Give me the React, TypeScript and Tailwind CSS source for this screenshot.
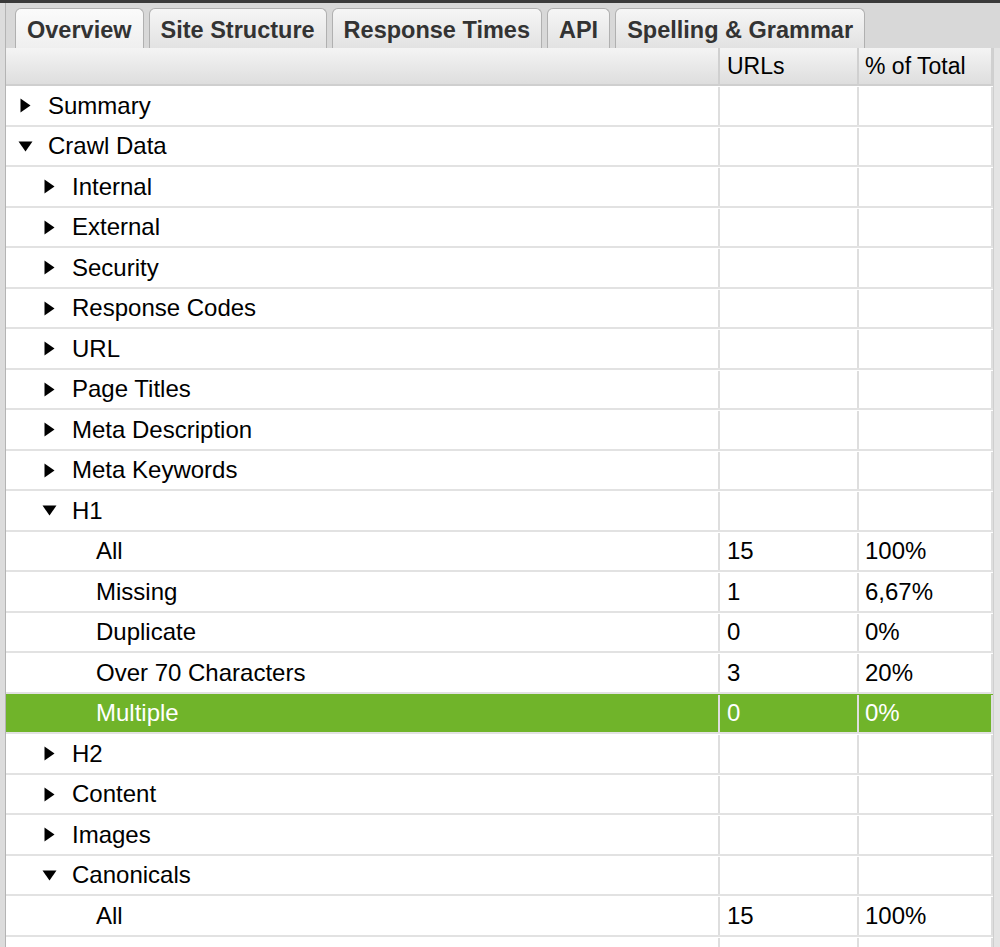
import React from "react";

type Row = {
  label: string;
  level: number;
  arrow?: "right" | "down";
  urls?: string;
  pct?: string;
  selected?: boolean;
};

const tabs = ["Overview", "Site Structure", "Response Times", "API", "Spelling & Grammar"];

const rows: Row[] = [
  { label: "Summary", level: 0, arrow: "right" },
  { label: "Crawl Data", level: 0, arrow: "down" },
  { label: "Internal", level: 1, arrow: "right" },
  { label: "External", level: 1, arrow: "right" },
  { label: "Security", level: 1, arrow: "right" },
  { label: "Response Codes", level: 1, arrow: "right" },
  { label: "URL", level: 1, arrow: "right" },
  { label: "Page Titles", level: 1, arrow: "right" },
  { label: "Meta Description", level: 1, arrow: "right" },
  { label: "Meta Keywords", level: 1, arrow: "right" },
  { label: "H1", level: 1, arrow: "down" },
  { label: "All", level: 2, urls: "15", pct: "100%" },
  { label: "Missing", level: 2, urls: "1", pct: "6,67%" },
  { label: "Duplicate", level: 2, urls: "0", pct: "0%" },
  { label: "Over 70 Characters", level: 2, urls: "3", pct: "20%" },
  { label: "Multiple", level: 2, urls: "0", pct: "0%", selected: true },
  { label: "H2", level: 1, arrow: "right" },
  { label: "Content", level: 1, arrow: "right" },
  { label: "Images", level: 1, arrow: "right" },
  { label: "Canonicals", level: 1, arrow: "down" },
  { label: "All", level: 2, urls: "15", pct: "100%" },
  { label: "", level: 2 },
];

function Arrow({ dir }: { dir: "right" | "down" }) {
  return dir === "right" ? (
    <svg width="11" height="15" viewBox="0 0 11 15" className="shrink-0">
      <path d="M0.5 0.5 L10.5 7.5 L0.5 14.5 Z" fill="#000" />
    </svg>
  ) : (
    <svg width="15" height="11" viewBox="0 0 15 11" className="shrink-0 -ml-[2px]">
      <path d="M0.5 0.5 L14.5 0.5 L7.5 10.5 Z" fill="#000" />
    </svg>
  );
}

const indent = ["pl-[14px]", "pl-[38px]", "pl-[62px]"];

export default function App() {
  return (
    <div
      className="w-[1000px] h-[947px] overflow-hidden bg-[#d8d8d8] border-t-[3px] border-[#3a3a3a] flex"
      style={{ fontFamily: '"Liberation Sans", Arial, Helvetica, sans-serif' }}
    >
      {/* left edge */}
      <div className="w-[6px] shrink-0 bg-[#dcdcdc] border-r border-[#b4b4b4]" />

      <div className="flex-1 flex flex-col min-w-0">
        {/* Tabs */}
        <div className="h-[45px] shrink-0 flex items-end gap-[5px] pl-[9px]">
          {tabs.map((t, i) => (
            <div
              key={t}
              className={
                "h-[40px] px-[11px] pt-[4px] flex items-center rounded-t-[6px] border border-b-0 border-[#b0b0b0] text-[23.5px] font-bold text-[#333] " +
                (i === 0
                  ? "bg-gradient-to-b from-[#fbfbfb] to-[#efefef]"
                  : "bg-gradient-to-b from-[#f6f6f6] to-[#e2e2e2]")
              }
            >
              {t}
            </div>
          ))}
        </div>

        <div className="flex-1 flex min-h-0">
          <div className="w-[987px] shrink-0 flex flex-col bg-white">
            {/* Header */}
            <div className="h-[38px] shrink-0 grid grid-cols-[712px_139px_136px] bg-gradient-to-b from-[#f4f4f4] to-[#dedede] border-b-2 border-[#cfcfcf] text-[23px] text-black">
              <div />
              <div className="border-l-2 border-[#d0d0d0] pl-[7px] flex items-center">URLs</div>
              <div className="border-l-2 border-[#d0d0d0] border-r-2 pl-[6px] flex items-center">% of Total</div>
            </div>

            {/* Rows */}
            {rows.map((r, i) => (
              <div
                key={i}
                className={
                  "h-[40.5px] shrink-0 grid grid-cols-[712px_139px_136px] border-b-2 text-[24px] pt-[1px] " +
                  (r.selected ? "bg-[#70b42a] text-white border-[#e2e2e2]" : "bg-white text-black border-[#e2e2e2]")
                }
              >
                <div className={"flex items-center " + indent[r.level]}>
                  <span className="w-[28px] flex items-center">{r.arrow && <Arrow dir={r.arrow} />}</span>
                  <span>{r.label}</span>
                </div>
                <div className="border-l-2 border-[#dedede] pl-[7px] flex items-center">{r.urls}</div>
                <div className="border-l-2 border-r-2 border-[#dedede] pl-[6px] flex items-center">{r.pct}</div>
              </div>
            ))}
          </div>

          {/* right edge */}
          <div className="flex-1 bg-[#e4e4e4] border-l border-[#cfcfcf]" />
        </div>
      </div>
    </div>
  );
}
